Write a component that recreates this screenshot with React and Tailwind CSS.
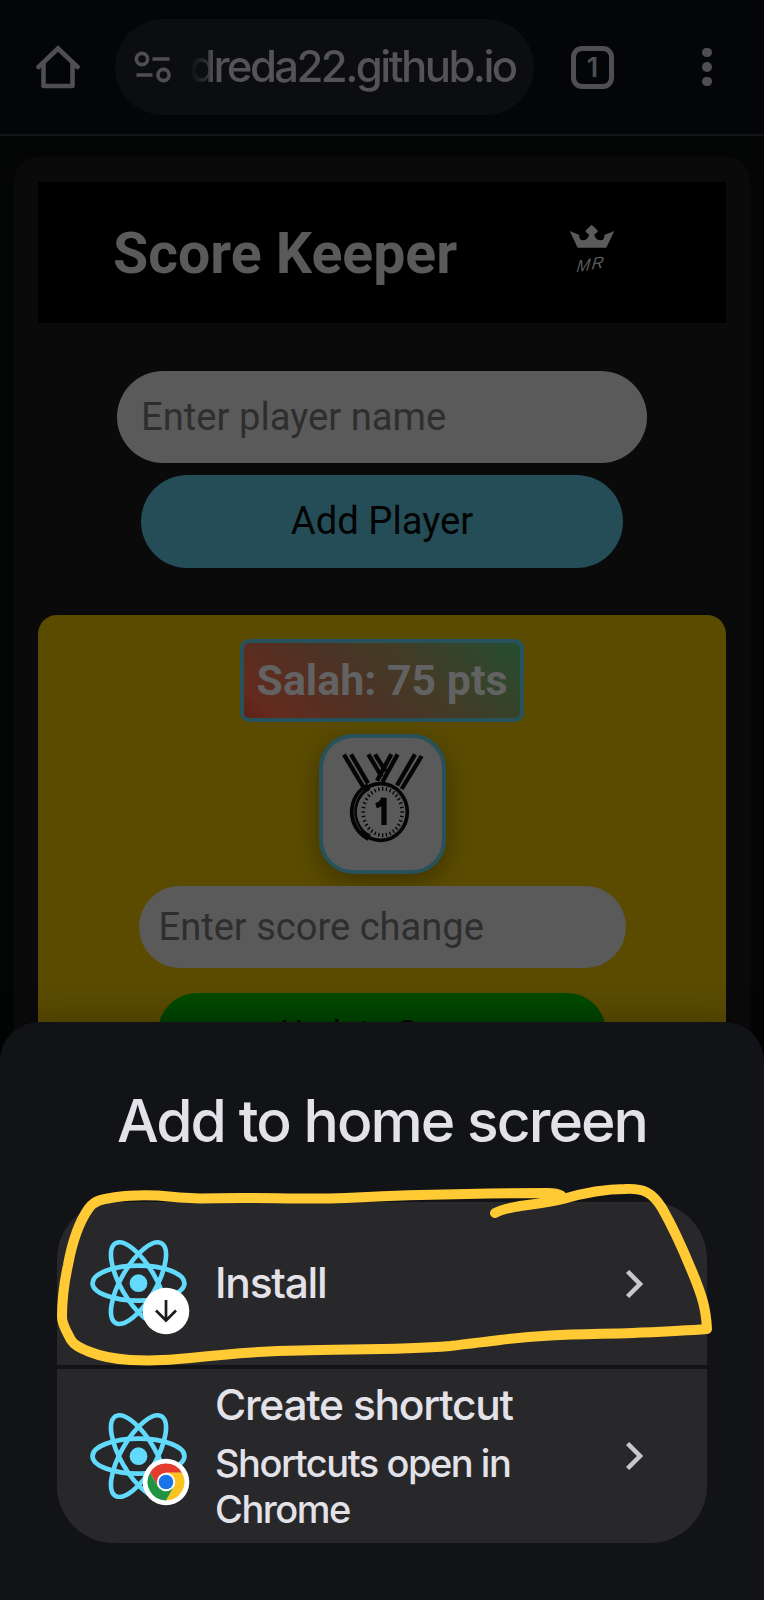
import React from "react";

function HomeIcon() {
  return (
    <svg width="44" height="46" viewBox="0 0 44 46" fill="none" stroke="#4f4f51" strokeWidth="4.6" strokeLinejoin="round">
      <path d="M2.500 23 L22 4.500 L41.500 23" strokeLinejoin="miter" strokeLinecap="round" />
      <path d="M7.500 19 V42 H36.500 V19" />
    </svg>
  );
}

function SiteInfoIcon() {
  return (
    <svg width="37" height="32" viewBox="0 0 37 32" fill="none" stroke="#4f4f51" strokeWidth="3.6">
      <circle cx="8" cy="8" r="5.600" />
      <path d="M18.500 8 H35.500 M2.500 24 H18.500" />
      <circle cx="29.500" cy="24" r="5.600" />
    </svg>
  );
}

function Toolbar() {
  return (
    <div className="flex h-[134px] items-center bg-[#040508] font-[Inter,sans-serif]">
      <div className="ml-[36px] w-[44px]"><HomeIcon /></div>
      <div className="ml-[35px] flex h-[96px] w-[419px] items-center rounded-full bg-[#0c0d11]">
        <div className="ml-[19px] w-[37px] shrink-0"><SiteInfoIcon /></div>
        <div className="ml-[18px] w-[340px] shrink-0 whitespace-nowrap bg-linear-to-r from-[#0c0d11] from-0% via-[#2c2d30] via-5% to-[#545456] to-7% bg-clip-text text-[43.700px] font-medium leading-[1.2] tracking-[-2.600px] text-transparent">
          dreda22.github.io
        </div>
      </div>
      <div className="ml-[37px] flex size-[43px] items-center justify-center rounded-[11px] border-[5px] border-[#4f4f51] text-[27px] font-semibold leading-none text-[#4f4f51]">
        1
      </div>
      <div className="ml-[88px] flex flex-col gap-[5px]">
        <span className="size-[9.500px] rounded-full bg-[#4f4f51]" />
        <span className="size-[9.500px] rounded-full bg-[#4f4f51]" />
        <span className="size-[9.500px] rounded-full bg-[#4f4f51]" />
      </div>
    </div>
  );
}

function CrownLogo() {
  return (
    <svg className="-mt-[5px]" width="48.300" height="54" viewBox="565 670 145 162" fill="#5b5b5b">
      <path d="M570 694 L594 744 H680 L704 694 L674 706 Q676 722 662 722 Q646 721 644 704 Q652 700 655 693 L636 675 L617 693 Q619 700 628 704 Q626 721 611 722 Q597 722 599 706 Z" />
      <g transform="translate(589 818) rotate(-8) skewX(-14)">
        <text x="0" y="0" fontFamily="Liberation Sans, sans-serif" fontStyle="italic" fontSize="50">M</text>
        <text x="46" y="-2" fontFamily="Liberation Sans, sans-serif" fontStyle="italic" fontSize="50">R</text>
      </g>
    </svg>
  );
}

const ticks = Array.from({ length: 32 }, (_, i) => (i * Math.PI) / 16);

function Medal() {
  return (
    <svg width="90" height="96" viewBox="410 390 270 288" fill="none" stroke="#050505">
      <g strokeWidth="13">
        <path d="M431 404 L489 501 M452 403 L503 490" />
        <path d="M504 403 L544 470 M524 403 L556 454" />
        <path d="M573 403 L530 482 M592 403 L546 486" />
        <path d="M644 403 L590 496 M664 408 L604 507" />
      </g>
      <ellipse cx="541" cy="576" rx="80" ry="85" strokeWidth="11" />
      <path d="M505 500 A80 84 0 0 0 507 653" strokeWidth="21" />
      <path d="M490 509 A82 86 0 0 0 482 632" stroke="#4a4a4a" strokeWidth="2" />
      {ticks.map((a) => (
        <line key={a} x1={547 + 53 * Math.cos(a)} y1={576 + 64 * Math.sin(a)} x2={547 + 64 * Math.cos(a)} y2={576 + 75 * Math.sin(a)} strokeWidth="4" />
      ))}
      <path d="M527 557 Q546 552 551 534 V615" strokeWidth="16" />
    </svg>
  );
}

function ScorePage() {
  return (
    <div className="flex-1 border-t-2 border-[#131417] bg-[#040505] px-[14px] pt-[21px] font-[Roboto,sans-serif]">
      <div className="h-[900px] rounded-t-[24px] bg-[#0a0a0a] px-[24px] pt-[25px] shadow-[0_0_12px_#070707]">
        <div className="flex h-[141px] items-center bg-black">
          <h1 className="ml-[75px] w-[344px] whitespace-nowrap pt-[2px] text-[57.200px] font-bold leading-none text-[#5a5a5a]">Score Keeper</h1>
          <div className="ml-[111px]"><CrownLogo /></div>
        </div>
        <div className="mt-[48px] flex flex-col items-center">
          <div className="flex h-[92px] w-[530px] items-center rounded-full bg-[#5a5a5a] pl-[24px] text-[38.200px] leading-none text-[#2e2e2e]">
            Enter player name
          </div>
          <div className="mt-[12px] flex h-[93px] w-[482px] items-center justify-center rounded-full bg-[#244d58] text-[38.200px] leading-none text-[#030303]">
            Add Player
          </div>
        </div>
        <div className="mt-[47px] flex h-[440px] flex-col items-center rounded-t-[19px] bg-[#5a4b00] pt-[24px]">
          <div className="flex h-[83px] w-[284px] shrink-0 items-center justify-center whitespace-nowrap rounded-[9px] border-4 border-[#28525b] bg-linear-[45deg,#5e2019_0%,#642a1d_8%,#4b3325_42%,#433b26_62%,#254d31_100%] text-[42.900px] font-bold leading-none text-[#626262]">
            Salah: 75 pts
          </div>
          <div className="mt-[12px] flex h-[140px] w-[127px] shrink-0 justify-center rounded-[34px] border-4 border-[#28525b] bg-[#5a5a5a] pt-[12px] shadow-[0_8px_24px_rgba(0,0,0,0.3)]">
            <Medal />
          </div>
          <div className="relative mt-[12px] flex h-[82px] w-[487px] shrink-0 items-center rounded-full bg-[#5a5a5a] pl-[20px] text-[38.100px] leading-none text-[#2e2e2e]">
            Enter score change
          </div>
          <div className="mt-[25px] flex h-[78px] w-[448px] shrink-0 items-center justify-center rounded-full bg-linear-to-b from-[#004b00] to-[#003500] text-[34px] leading-none text-[#020402]">
            Update Score
          </div>
        </div>
      </div>
    </div>
  );
}

function ReactLogo() {
  return (
    <svg width="97" height="86.300" viewBox="-11.5 -10.23 23 20.46">
      <circle r="2.100" fill="#61dafb" />
      <g stroke="#61dafb" strokeWidth="1.100" fill="none">
        <ellipse rx="10.900" ry="4.150" />
        <ellipse rx="10.900" ry="4.150" transform="rotate(60)" />
        <ellipse rx="10.900" ry="4.150" transform="rotate(120)" />
      </g>
    </svg>
  );
}

function DownloadBadge() {
  return (
    <svg width="48" height="48" viewBox="-24 -24 48 48">
      <circle r="23.300" fill="#fff" />
      <path d="M0 -11 V10 M-10 -0.500 L0 9.500 L10 -0.500" fill="none" stroke="#1d1d1f" strokeWidth="2.700" />
    </svg>
  );
}

function ChromeBadge() {
  return (
    <svg width="48" height="48" viewBox="-24 -24 48 48">
      <circle r="23.300" fill="#fff" />
      <path d="M-15.940 -9.200 A18.400 18.400 0 0 1 15.940 -9.200 L0 -9.200 L-7.970 4.600 Z" fill="#e33b2e" />
      <path d="M15.940 -9.200 A18.400 18.400 0 0 1 0 18.400 L7.970 4.600 L0 -9.200 Z" fill="#fcc31e" />
      <path d="M0 18.400 A18.400 18.400 0 0 1 -15.940 -9.200 L-7.970 4.600 L7.970 4.600 Z" fill="#229342" />
      <circle r="9.200" fill="#fff" />
      <circle r="7.300" fill="#1a73e8" />
    </svg>
  );
}

function Chevron() {
  return (
    <svg width="20" height="30" viewBox="0 0 20 30" fill="none" stroke="#c8c7cd" strokeWidth="4.600">
      <path d="M2.600 2.500 L15 15 L2.600 27.500" />
    </svg>
  );
}

function AppIcon({ badge, badgeClass }) {
  return (
    <div className="relative ml-[33px] w-[97px] shrink-0">
      <ReactLogo />
      <div className={badgeClass}>{badge}</div>
    </div>
  );
}

const marker =
  "M495 1213 C502 1209 510 1208 520 1206 C535 1204 548 1203 563 1199 C580 1194 600 1189 625 1189 C643 1188 652 1192 662 1208 C674 1229 684 1252 691 1269 C703 1297 706 1310 707 1329 C680 1331 655 1332 633 1333 C600 1334 578 1334 550 1335.500 C530 1336.500 515 1338 500 1340 C483 1342 468 1344 450 1346 C400 1350 350 1349 300 1350.500 C262 1351 235 1353 190 1358 C165 1361 150 1361 130 1360 C115 1359 100 1356 90 1352 C80 1348 74 1345 71 1340 C67 1332 62 1325 62 1317 C62 1300 64 1283 68 1265 C72 1243 79 1222 89 1208 C96 1199 105 1199 117 1197 C130 1195 142 1195 157 1195.500 C171 1197 180 1198 200 1198.500 C250 1197 285 1199 330 1198.500 C360 1198 380 1195.500 420 1195 C455 1194 500 1193 547 1193 C555 1193 558 1193.500 561 1195.500";

function InstallSheet() {
  return (
    <div className="absolute inset-x-0 top-[1022px] h-[578px] rounded-t-[39px] bg-[#121317] px-[57px] font-[Inter,sans-serif] text-[#e3e2e8] shadow-[0_-4px_34px_rgba(0,0,0,0.22)]">
      <h2 className="mt-[63px] whitespace-nowrap text-center text-[58.800px] font-medium leading-[72px] tracking-[-1.950px]">
        Add to home screen
      </h2>
      <div className="mt-[45px] flex flex-col gap-[4px]">
        <div className="flex h-[163px] items-center rounded-t-[57px] bg-[#28282b]">
          <AppIcon badge={<DownloadBadge />} badgeClass="absolute left-[52px] top-[47px]" />
          <div className="ml-[28px] w-[330px] shrink-0 text-[42.500px] font-medium leading-none tracking-[-1.250px]">Install</div>
          <div className="ml-[80px]"><Chevron /></div>
        </div>
        <div className="flex h-[174px] items-center rounded-b-[57px] bg-[#28282b]">
          <AppIcon badge={<ChromeBadge />} badgeClass="absolute left-[52px] top-[45px]" />
          <div className="ml-[28px] w-[330px] shrink-0 font-medium">
            <div className="-mt-[2px] whitespace-nowrap text-[42.500px] leading-[54px] tracking-[-1.250px]">Create shortcut</div>
            <div className="mt-[8px] text-[38px] leading-[46px] tracking-[-1.480px]">Shortcuts open in<br />Chrome</div>
          </div>
          <div className="ml-[80px]"><Chevron /></div>
        </div>
      </div>
    </div>
  );
}

export default function App() {
  return (
    <div className="relative flex h-[1600px] w-[764px] flex-col overflow-hidden bg-[#040505]">
      <Toolbar />
      <ScorePage />
      <InstallSheet />
      <svg className="pointer-events-none absolute left-0 top-[1170px]" width="764" height="210" viewBox="0 1170 764 210">
        <path d={marker} fill="none" stroke="#ffca33" strokeWidth="10" strokeLinecap="round" strokeLinejoin="round" />
      </svg>
    </div>
  );
}
